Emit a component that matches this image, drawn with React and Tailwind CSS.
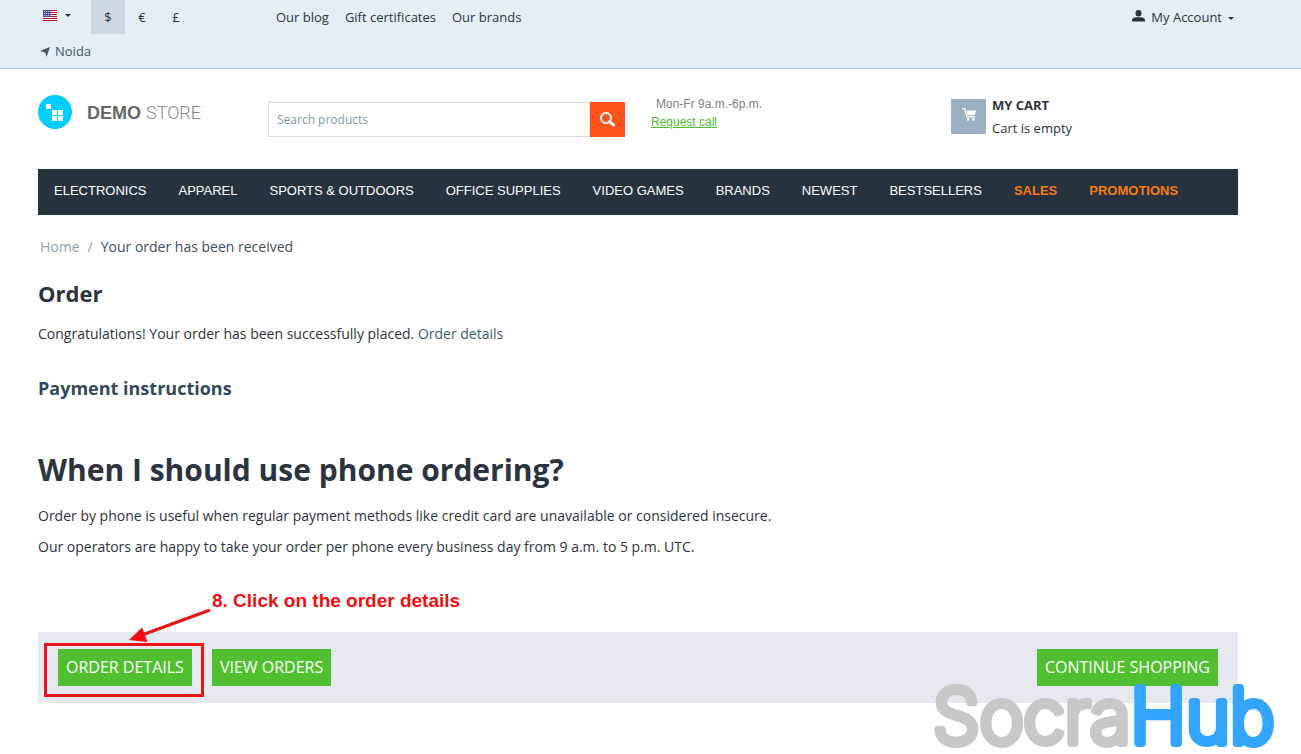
import React from "react";

const currencies = ["$", "€", "£"];

const quickLinks = ["Our blog", "Gift certificates", "Our brands"];

const menuItems = [
  { label: "Electronics" },
  { label: "Apparel" },
  { label: "Sports & Outdoors" },
  { label: "Office Supplies" },
  { label: "Video Games" },
  { label: "Brands" },
  { label: "Newest" },
  { label: "Bestsellers" },
  { label: "Sales", hot: true },
  { label: "Promotions", hot: true },
];

const Caret = () => (
  <svg width="6" height="3" viewBox="0 0 6 3" fill="currentColor" aria-hidden="true">
    <path d="M0 0h6L3 3z" />
  </svg>
);

const UsFlag = () => (
  <svg width="14" height="11" viewBox="0 0 14 11" aria-hidden="true">
    <rect width="14" height="11" fill="#f3eef2" />
    <path
      d="M0 .5h14M0 2.5h14M0 4.5h14M0 6.5h14M0 8.5h14M0 10.5h14"
      stroke="#d0141f"
      strokeWidth="1"
    />
    <rect width="8" height="7" fill="#4a53b0" />
    <path
      d="M1 1.5h7M1 3.5h7M1 5.5h7"
      stroke="#c3c8ea"
      strokeWidth="1"
      strokeDasharray="1 1"
    />
  </svg>
);

const TopBar = () => (
  <div className="border-b border-[#b0cbd8] bg-[#e6eef5] text-[13px] text-[#2c3440]">
    <div className="flex h-[34px] items-stretch pr-[63px] pl-[38px]">
      <div className="flex w-[238px]">
        <button type="button" aria-label="Language" className="flex w-[53px] items-center gap-2 pb-1 pl-[5px]">
          <UsFlag />
          <Caret />
        </button>
        {currencies.map((c, i) => (
          <button
            key={c}
            type="button"
            className={i === 0 ? "w-[34px] bg-[#ced8e3] pt-[2px]" : "w-[34px] pt-[2px]"}
          >
            {c}
          </button>
        ))}
      </div>
      <nav className="flex items-center gap-4 pt-[2px]">
        {quickLinks.map((link) => (
          <a key={link} href="#">
            {link}
          </a>
        ))}
      </nav>
      <button type="button" className="ml-auto flex items-center gap-[6px] pt-[2px] pr-1">
        <svg className="mb-1" width="13" height="12" viewBox="0 0 13 12" fill="currentColor" aria-hidden="true">
          <ellipse cx="6.5" cy="3.3" rx="3" ry="3.3" />
          <path d="M0 11.500V10c0-1.500 2.400-2.800 4-2.800h5c1.600 0 4 1.300 4 2.800v1.500z" />
        </svg>
        <span>My Account</span>
        <Caret />
      </button>
    </div>
    <div className="flex h-[34px] items-center pt-[2px] pl-10">
      <a href="#" className="flex items-center gap-[5px] text-[#3d556b]">
        <svg width="10" height="10" viewBox="0 0 10 10" fill="currentColor" aria-hidden="true">
          <path d="M10 0L6.500 10 5.300 5.400 0 4z" />
        </svg>
        Noida
      </a>
    </div>
  </div>
);

const Logo = () => (
  <a href="#" className="flex w-[230px] items-center gap-[15px]">
    <svg width="34" height="34" viewBox="0 0 34 34" aria-hidden="true">
      <circle cx="17" cy="17" r="17" fill="#03ccff" />
      <g fill="#fff">
        <rect x="8" y="9" width="5" height="5" />
        <rect x="14" y="15" width="5" height="5" />
        <rect x="20" y="15" width="5" height="5" />
        <rect x="14" y="21" width="5" height="5" />
        <rect x="20" y="21" width="5" height="5" />
      </g>
    </svg>
    <span className="flex items-baseline gap-[5px] pt-[2px] text-[18px]">
      <b className="font-['Liberation_Sans',sans-serif] text-[#666]">DEMO</b>
      <span className="font-['Roboto',sans-serif] font-light text-[#888]">STORE</span>
    </span>
  </a>
);

const Header = () => (
  <header className="flex h-[100px] items-start pr-[63px] pl-[38px]">
    <div className="pt-[26px]">
      <Logo />
    </div>
    <form className="mt-[33px] flex h-[35px] w-[357px]">
      <input
        type="search"
        aria-label="Search products"
        placeholder="Search products"
        className="min-w-0 flex-1 border border-r-0 border-[#d9dde1] px-2 text-[12px] outline-none placeholder:text-[#8298ae]"
      />
      <button
        type="button"
        aria-label="Search"
        className="flex w-[35px] items-center justify-center bg-[#ff5319] text-white"
      >
        <svg width="16" height="16" viewBox="0 0 16 16" fill="none" stroke="currentColor" aria-hidden="true">
          <circle cx="6" cy="6" r="5" strokeWidth="2" />
          <path d="M10 10l3.500 3.200" strokeWidth="3" strokeLinecap="round" />
        </svg>
      </button>
    </form>
    <div className="ml-[26px] w-[300px] pt-[26px] font-['Liberation_Sans',sans-serif] text-[12px] leading-[18px]">
      <p className="pl-[5px] text-[#808080]">Mon-Fr 9a.m.-6p.m.</p>
      <a href="#" className="text-[#4fbe30] underline">
        Request call
      </a>
    </div>
    <a href="#" className="mt-[30px] flex gap-[6px] text-[13px] text-[#2c3440]">
      <span className="flex h-[35px] w-[35px] items-center justify-center bg-[#9db0c1] pb-1 text-white">
        <svg width="14" height="13" viewBox="0 0 14 13" fill="currentColor" aria-hidden="true">
          <path d="M0 .6h2.600l2.300 8.200H13" fill="none" stroke="currentColor" strokeWidth="1.300" />
          <path d="M4.500 2.500H14l-1.200 4.700H5.600z" />
          <circle cx="6" cy="11.500" r="1.300" />
          <circle cx="11.300" cy="11.500" r="1.300" />
        </svg>
      </span>
      <span className="-mt-[5px] flex flex-col leading-[23px]">
        <b>MY CART</b>
        <span>Cart is empty</span>
      </span>
    </a>
  </header>
);

const MainMenu = () => (
  <nav className="flex h-[46px] items-center bg-[#26323e] pb-[3px] font-['Liberation_Sans',sans-serif] text-[13px] text-white uppercase">
    {menuItems.map((item) => (
      <a
        key={item.label}
        href="#"
        className={item.hot ? "px-4 font-bold text-[#f97c0c]" : "px-4"}
      >
        {item.label}
      </a>
    ))}
  </nav>
);

const ActionButton = ({ children }) => (
  <button type="button" className="h-[37px] bg-[#50bf30] px-2 pb-[2px] text-[16px] text-white uppercase">
    {children}
  </button>
);

// Red box, arrow and caption pointing at the first button
const Callout = () => (
  <>
    <div className="absolute top-[11px] left-[6px] h-[54px] w-[160px] border-[3px] border-[#ea1418]" />
    <svg
      className="absolute -top-[24px] left-[90px]"
      width="84"
      height="36"
      viewBox="0 0 84 36"
      aria-hidden="true"
    >
      <path d="M82 2L14 27" stroke="#ea1418" strokeWidth="3" />
      <path d="M1 32L14 19.500 19.500 34z" fill="#f30d12" />
    </svg>
    <p className="absolute -top-[43px] left-[174px] font-['Liberation_Sans',sans-serif] text-[19px] leading-6 font-bold whitespace-nowrap text-[#f30d12]">
      8. Click on the order details
    </p>
  </>
);

const Watermark = () => (
  <svg
    className="pointer-events-none fixed right-[20px] bottom-0 overflow-visible"
    width="352"
    height="76"
    viewBox="0 0 352 76"
    role="img"
    aria-label="SocraHub"
  >
    <text
      x="4"
      y="65"
      fontFamily="Inter, sans-serif"
      fontSize="75"
      fontWeight="200"
      strokeWidth="8"
      strokeLinejoin="round"
      strokeLinecap="round"
    >
      <tspan fill="#c8c8c8" stroke="#c8c8c8">Socra</tspan>
      <tspan fill="#33a4ff" stroke="#33a4ff">Hub</tspan>
    </text>
  </svg>
);

export default function App() {
  return (
    <div className="bg-white font-['Open_Sans',sans-serif] text-[14px] text-[#2c3440]">
      <TopBar />
      <Header />
      <main className="pr-[63px] pl-[38px]">
        <MainMenu />
        <div className="mt-[22px] flex gap-2 pl-[2px] leading-5 text-[#8ea0b2]">
          <a href="#">Home</a>
          <span>/</span>
          <span className="text-[#3d5064]">Your order has been received</span>
        </div>
        <h1 className="mt-[21px] text-[22px] leading-[30px] font-bold">Order</h1>
        <p className="mt-4 leading-5">
          Congratulations! Your order has been successfully placed.{" "}
          <a href="#" className="text-[#3d5a75]">
            Order details
          </a>
        </p>
        <h3 className="mt-8 text-[18px] leading-6 font-bold text-[#34485c]">Payment instructions</h3>
        <h2 className="mt-[50px] text-[30px] leading-10 font-bold">When I should use phone ordering?</h2>
        <p className="mt-4 leading-5">
          Order by phone is useful when regular payment methods like credit card are unavailable or
          considered insecure.
        </p>
        <p className="mt-[11px] leading-5">
          Our operators are happy to take your order per phone every business day from 9 a.m. to 5
          p.m. UTC.
        </p>
        <div className="relative mt-[75px] flex h-[71px] items-center justify-between bg-[#e6e9f0] px-5">
          <div className="flex gap-5">
            <ActionButton>Order details</ActionButton>
            <ActionButton>View orders</ActionButton>
          </div>
          <ActionButton>Continue shopping</ActionButton>
          <Callout />
        </div>
      </main>
      <Watermark />
    </div>
  );
}
